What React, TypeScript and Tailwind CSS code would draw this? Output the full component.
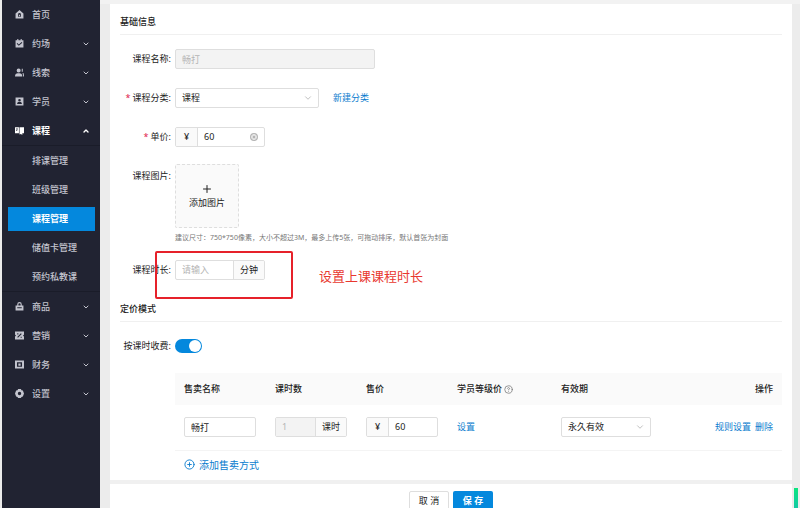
import React, { useState } from "react";
import { ChevronDown, ChevronUp, CircleHelp, CirclePlus, CircleX, Plus } from "lucide-react";

// Glyphs for the side menu, all on a 16 x 16 grid
const ICONS: Record<string, string> = {
  home: "M8 0 15 6v9H1V6zM8 5.5a2.5 2.5 0 0 0-2.5 2.5v4h5V8A2.5 2.5 0 0 0 8 5.5zM7 8.5h2V11H7z",
  calendar: "M1 2h3V0h2v2h4V0h2v2h3v13H1zM4.2 7.2 3 8.5l3.8 3.7L13 6.5l-1.2-1.3-5 4.6z",
  leads: "M6.5 1a3.6 3.6 0 1 1 0 7.2 3.6 3.6 0 0 1 0-7.2zM0 15c0-4 2-5.6 5-5.6h3c3 0 5 1.6 5 5.6zM12 1.5h1.8v5H12zM13.5 9H15c1 2 1 4 1 6h-1.5z",
  student: "M1 1h14v14H1zM8 3.5a2.3 2.3 0 1 0 0 4.6 2.3 2.3 0 0 0 0-4.6zM3.8 12.5h8.4c0-2.5-1.2-3.4-3-3.4H6.8c-1.8 0-3 .9-3 3.4z",
  course: "M0 2h7v11H0zM8 2h8v11h-3v3l-2.5-2L8 15zM2 4.5V6h3V4.5zM2 7.5V9h2V7.5z",
  goods: "M1 6h3V4a4 4 0 0 1 8 0v2h3v9H1zM6 6h4V4a2 2 0 0 0-4 0zM4 9.5V11h8V9.5z",
  marketing: "M0 1h16v5.5a1.5 1.5 0 0 0 0 3V15H0V9.5a1.5 1.5 0 0 0 0-3zM4 4v2h2V4zM10.5 4 4 10.8 5.3 12 12 5.2zM10 10v2h2v-2z",
  finance: "M0 1h16v14H0zM3.5 4v8h9V4zM6 6h4v4H6z",
  settings: "M5.5 0h5l1 2 2.500.5L16 8l-2 5.500-2.500.5-1 2h-5l-1-2L2 13.500 0 8l2-5.500L4.500 2zM8 5a3 3 0 1 0 0 6 3 3 0 0 0 0-6z",
};

const MENU = [
  { name: "首页", icon: "home" },
  { name: "约场", icon: "calendar", more: true },
  { name: "线索", icon: "leads", more: true },
  { name: "学员", icon: "student", more: true },
  {
    name: "课程",
    icon: "course",
    more: true,
    children: ["排课管理", "班级管理", "课程管理", "储值卡管理", "预约私教课"],
  },
  { name: "商品", icon: "goods", more: true },
  { name: "营销", icon: "marketing", more: true },
  { name: "财务", icon: "finance", more: true },
  { name: "设置", icon: "settings", more: true },
];

function MenuIcon({ name }: { name: string }) {
  return (
    <svg viewBox="0 0 16 16" className="size-[9px] shrink-0" fill="currentColor" fillRule="evenodd" aria-hidden="true">
      <path d={ICONS[name]} />
    </svg>
  );
}

function Sidebar() {
  return (
    <nav className="w-[98px] shrink-0 bg-[#212332] text-[#c3c4ce] font-medium">
      {MENU.map((item) => (
        <div key={item.name}>
          <button
            type="button"
            className={`flex h-[29px] w-full items-center pl-[13px] pr-[10px] ${item.children ? "text-white font-bold" : ""}`}
          >
            <MenuIcon name={item.icon} />
            <span className="ml-2 flex-1 text-left">{item.name}</span>
            {item.more && (item.children
              ? <ChevronUp className="size-2" strokeWidth={4} />
              : <ChevronDown className="size-2" strokeWidth={3} />)}
          </button>
          {item.children && (
            <ul className="border-y border-[#1a1c29]">
              {item.children.map((child) => (
                <li key={child} className="flex h-[29px] items-center pl-[6px] pr-[5px]">
                  <a
                    href="#"
                    className={`flex h-6 flex-1 items-center pl-6 ${child === "课程管理" ? "bg-[#0488dd] text-white font-bold" : ""}`}
                  >
                    {child}
                  </a>
                </li>
              ))}
            </ul>
          )}
        </div>
      ))}
    </nav>
  );
}

function SectionTitle({ children }: { children: React.ReactNode }) {
  return <h2 className="border-b border-[#f0f0f0] pb-1 leading-4 font-medium">{children}</h2>;
}

function Field({ label, htmlFor, required, children }: {
  label: string, htmlFor: string, required?: boolean, children: React.ReactNode
}) {
  return (
    <div className="relative flex items-start">
      <label htmlFor={htmlFor} className="mr-1 flex h-5 w-[51px] shrink-0 items-center justify-end whitespace-nowrap">
        {required && <span className="mr-[2px] text-[#e0204a]">*</span>}
        {label}:
      </label>
      {children}
    </div>
  );
}

function Select({ id, label, value, className }: { id: string, label?: string, value: string, className: string }) {
  return (
    <div className={`relative ${className}`}>
      <select
        id={id}
        aria-label={label}
        className="h-5 w-full appearance-none rounded-[2px] border border-[#dedede] bg-white px-[6px] outline-none"
      >
        <option>{value}</option>
      </select>
      <ChevronDown className="pointer-events-none absolute right-[6px] top-[5px] size-[10px] text-[#b5b5b5]" />
    </div>
  );
}

const GROUP = "flex h-5 items-stretch overflow-hidden rounded-[2px] border border-[#dedede]";

export default function CourseEdit() {
  const [byLesson, setByLesson] = useState(true);

  return (
    <div className="flex h-screen overflow-hidden bg-[#ececec] pl-[2px] font-['Noto_Sans','Noto_Sans_CJK_SC',sans-serif] text-[9px] leading-3 text-[#222]">
      <Sidebar />

      <div className="flex min-w-0 flex-1 flex-col border-t-4 border-[#f2f2f2] pl-[10px] pr-2">
        <main className="min-h-0 flex-1 overflow-hidden bg-white px-[10px] pt-[10px]">
          <SectionTitle>基础信息</SectionTitle>

          <form className="mt-[14px] flex flex-col gap-[19px]">
            <Field label="课程名称" htmlFor="course-name">
              <input
                id="course-name"
                disabled
                defaultValue="畅打"
                className="h-5 w-[200px] rounded-[2px] border border-[#dedede] bg-[#f3f3f3] px-[6px] text-[#b5b5b5]"
              />
            </Field>

            <Field label="课程分类" htmlFor="course-type" required>
              <Select id="course-type" value="课程" className="w-[144px]" />
              <a href="#" className="ml-[14px] leading-5 text-[#0a7cce]">新建分类</a>
            </Field>

            <Field label="单价" htmlFor="price" required>
              <div className={`${GROUP} w-[90px] items-center`}>
                <span className="flex w-[22px] shrink-0 items-center justify-center self-stretch border-r border-[#dedede] bg-[#fafafa]">¥</span>
                <input id="price" defaultValue="60" className="w-0 flex-1 px-[6px] outline-none" />
                <button type="button" aria-label="清空" className="mr-[6px]">
                  <CircleX className="size-2 text-[#b5b5b5]" strokeWidth={4} />
                </button>
              </div>
            </Field>

            <Field label="课程图片" htmlFor="picture">
              <div className="-mt-[2px]">
                <button
                  id="picture"
                  type="button"
                  className="flex size-16 flex-col items-center justify-center gap-[2px] rounded-[2px] border border-dashed border-[#dedede] bg-[#fafafa]"
                >
                  <Plus className="size-3" strokeWidth={2} />
                  添加图片
                </button>
                <p className="mt-1 text-[7px] leading-3 text-[#777]">
                  建议尺寸：750*750像素，大小不超过3M，最多上传5张，可拖动排序，默认首张为封面
                </p>
              </div>
            </Field>

            <div className="-mt-[3px]">
              <Field label="课程时长" htmlFor="duration">
                <div className={`${GROUP} w-[90px]`}>
                  <input id="duration" placeholder="请输入" className="w-0 flex-1 px-[6px] outline-none placeholder:text-[#b5b5b5]" />
                  <span className="flex w-[31px] items-center justify-center border-l border-[#dedede] bg-[#fafafa]">分钟</span>
                </div>
                {/* Callout drawn over the duration field */}
                <div className="pointer-events-none absolute -top-[9px] left-[35px] h-12 w-[138px] rounded-[2px] border-2 border-[#e6212a]" />
                <p className="absolute left-[199px] top-[6px] text-[13px] leading-5 text-[#e8382f]">设置上课课程时长</p>
              </Field>
            </div>
          </form>

          <div className="mt-[21px]">
            <SectionTitle>定价模式</SectionTitle>
          </div>

          <div className="mt-[14px]">
            <Field label="按课时收费" htmlFor="by-lesson">
              <div className="flex h-5 items-center">
                <button
                  id="by-lesson"
                  type="button"
                  role="switch"
                  aria-checked={byLesson}
                  onClick={() => setByLesson(!byLesson)}
                  className={`flex h-[14px] w-[27px] items-center rounded-full px-px ${byLesson ? "justify-end bg-[#0488dd]" : "justify-start bg-[#bfbfbf]"}`}
                >
                  <span className="size-3 rounded-full bg-white" />
                </button>
              </div>
            </Field>
          </div>

          <div className="ml-[55px] mt-[17px]">
            <table className="w-full table-fixed text-left">
              <thead>
                <tr className="h-8 bg-[#fafafa] [&>th]:px-[9px] [&>th]:font-medium">
                  <th className="w-[91px]">售卖名称</th>
                  <th className="w-[91px]">课时数</th>
                  <th className="w-[91px]">售价</th>
                  <th className="w-[104px]">
                    <span className="flex items-center gap-[2px]">
                      学员等级价
                      <CircleHelp className="size-[9px] text-[#777]" />
                    </span>
                  </th>
                  <th>有效期</th>
                  <th className="text-right">操作</th>
                </tr>
              </thead>
              <tbody>
                <tr className="h-[45px] border-b border-[#f4f4f4] [&>td]:pl-[9px]">
                  <td>
                    <input
                      aria-label="售卖名称"
                      defaultValue="畅打"
                      className="block h-5 w-[72px] rounded-[2px] border border-[#dedede] px-[6px] outline-none"
                    />
                  </td>
                  <td>
                    <div className={`${GROUP} w-[72px]`}>
                      <input aria-label="课时数" disabled defaultValue="1" className="w-0 flex-1 bg-[#f3f3f3] px-[6px] text-[#b5b5b5]" />
                      <span className="flex w-[31px] items-center justify-center border-l border-[#dedede] bg-[#fafafa]">课时</span>
                    </div>
                  </td>
                  <td>
                    <div className={`${GROUP} w-[72px]`}>
                      <span className="flex w-[22px] items-center justify-center border-r border-[#dedede] bg-[#fafafa]">¥</span>
                      <input aria-label="售价" defaultValue="60" className="w-0 flex-1 px-[6px] outline-none" />
                    </div>
                  </td>
                  <td><a href="#" className="text-[#0a7cce]">设置</a></td>
                  <td><Select id="validity" label="有效期" value="永久有效" className="w-[90px]" /></td>
                  <td className="pr-[9px]">
                    <div className="flex justify-end gap-1 text-[#0a7cce]">
                      <a href="#">规则设置</a>
                      <a href="#">删除</a>
                    </div>
                  </td>
                </tr>
              </tbody>
            </table>
            <button type="button" className="ml-[9px] flex h-7 items-center gap-1 text-[10px] text-[#0a7cce]">
              <CirclePlus className="size-[11px]" strokeWidth={2} />
              添加售卖方式
            </button>
          </div>
        </main>

        <footer className="flex h-7 shrink-0 items-start justify-center gap-1 border-t-4 border-[#f0f0f0] bg-white pt-[7px]">
          <button type="button" className="h-5 w-10 shrink-0 rounded-[2px] border border-[#dedede] bg-white">取 消</button>
          <button type="button" className="h-5 w-10 shrink-0 rounded-[2px] bg-[#0488dd] font-bold text-white">保 存</button>
        </footer>
      </div>

      <div className="pointer-events-none absolute bottom-0 right-[2px] h-5 w-1 bg-linear-to-b from-[#0be57e] to-[#14c9a4]" />
    </div>
  );
}
